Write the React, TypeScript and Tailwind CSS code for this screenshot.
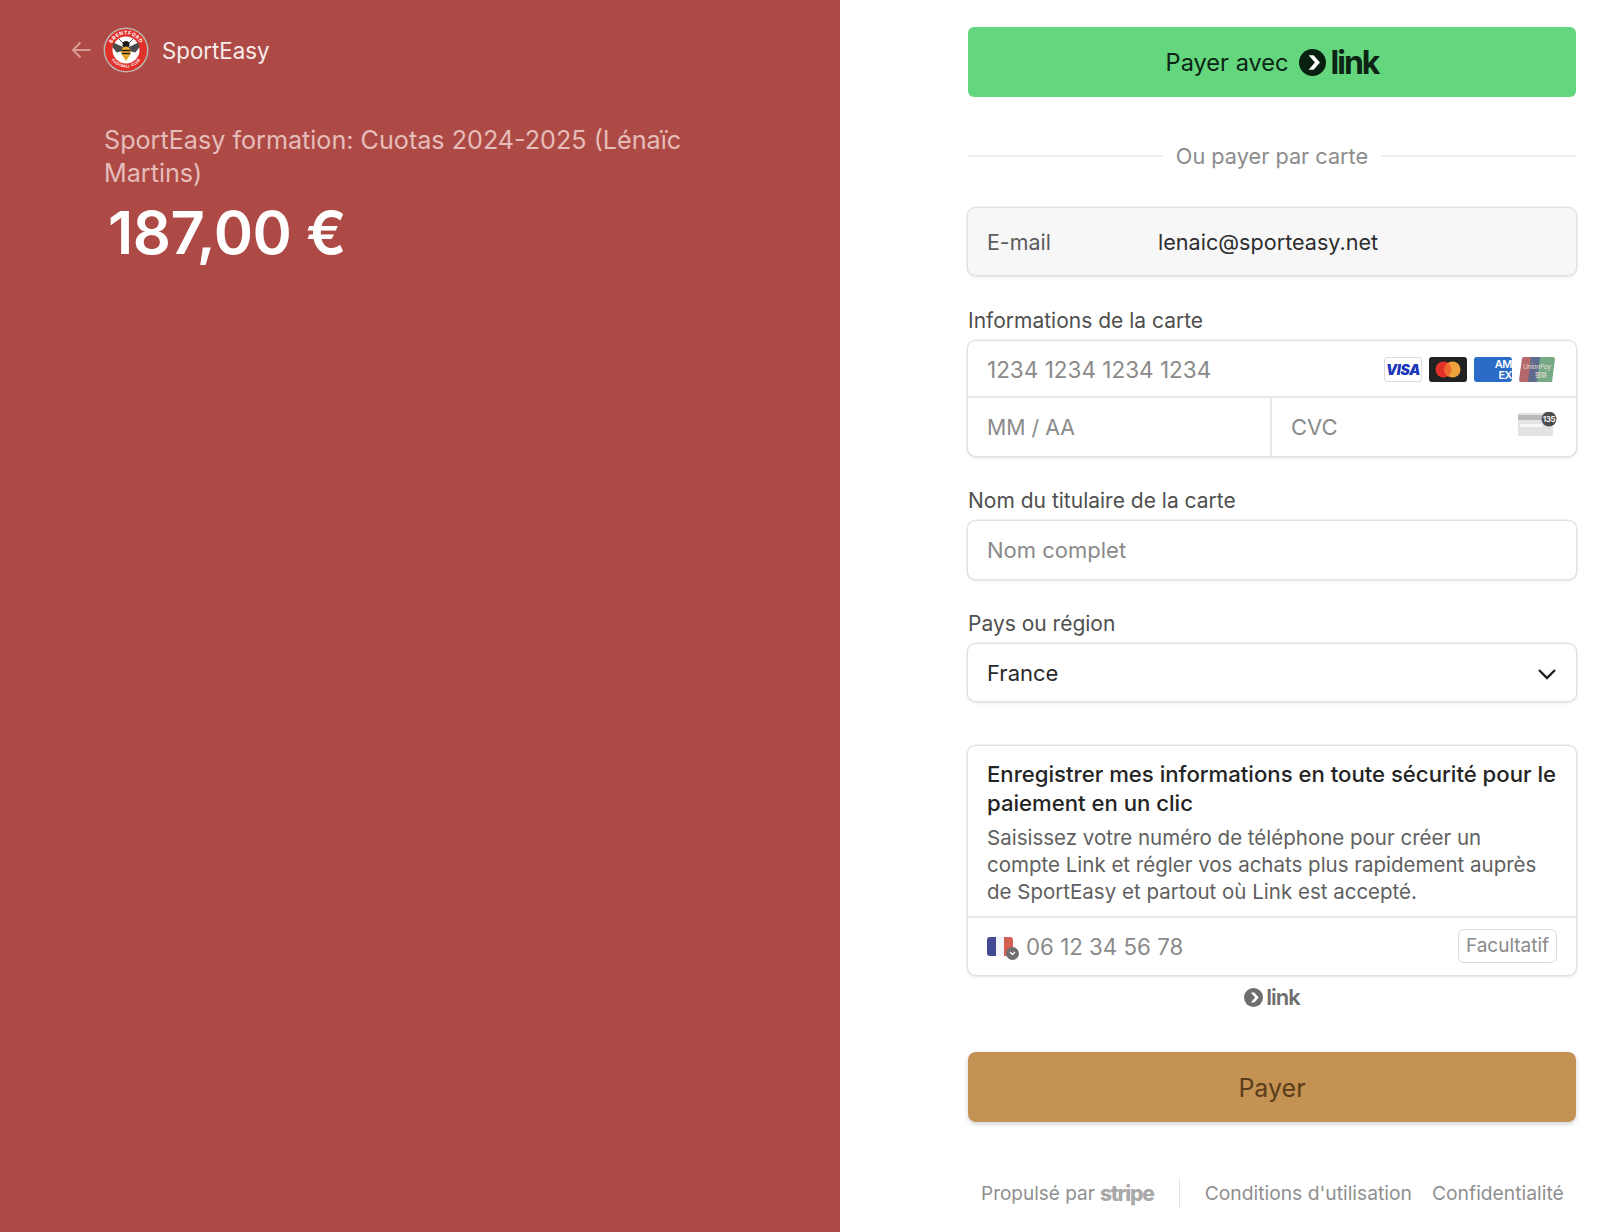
const boxShadow = "rounded-[8px] shadow-[0_0_0_1.5px_#e2e2e2,0_2px_4px_rgba(0,0,0,0.09)]";

function LinkMark({ size, color, arrow }: { size: number; color: string; arrow: string }) {
  return (
    <svg width={size} height={size} viewBox="0 0 28 28" className="shrink-0">
      <circle cx="14" cy="14" r="14" fill={color} />
      <path d="M10 6.500 16.500 14 10 21.500h5.200L21.700 14l-6.500-7.500z" fill={arrow} />
    </svg>
  );
}

function CrestLogo() {
  return (
    <svg width="46" height="46" viewBox="0 0 46 46" className="shrink-0">
      <defs>
        <path id="crestTop" d="M7.500 23a15.500 15.500 0 0 1 31 0" />
        <path id="crestBottom" d="M5.500 23a17.500 17.500 0 0 0 35 0" />
      </defs>
      <circle cx="23" cy="23" r="22.500" fill="#b9b4b0" />
      <circle cx="23" cy="23" r="21" fill="#e0302a" />
      <circle cx="23" cy="23" r="13.500" fill="#ffffff" />
      <text fontSize="5" fontWeight="700" fill="#ffffff" fontFamily="Inter, sans-serif" letterSpacing="0.5">
        <textPath href="#crestTop" startOffset="50%" textAnchor="middle">BRENTFORD</textPath>
      </text>
      <text fontSize="3.600" fontWeight="700" fill="#ffffff" fontFamily="Inter, sans-serif" letterSpacing="0.3">
        <textPath href="#crestBottom" startOffset="50%" textAnchor="middle">FOOTBALL CLUB</textPath>
      </text>
      <path d="M22 21 10.500 15.500 9.500 20l4 5.500 8.500-2z" fill="#4b4b4b" />
      <path d="M24 21l11.500-5.500 1 4.500-4 5.500-8.500-2z" fill="#4b4b4b" />
      <path d="M20 16 16 12M26 16l4-4" stroke="#222" strokeWidth="0.8" />
      <circle cx="23" cy="17.500" r="3.500" fill="#1d1d1d" />
      <ellipse cx="23" cy="25" rx="4.800" ry="5.500" fill="#f0ae2e" />
      <path d="M18.500 23.500h9M18.800 26.500h8.400" stroke="#222" strokeWidth="1.300" />
      <path d="M19.800 29 23 34l3.200-5z" fill="#e79f1f" />
    </svg>
  );
}

function VisaIcon() {
  return (
    <div className="flex h-[25px] w-[38px] items-center justify-center rounded-[3px] border border-[#dcdcdc] bg-white">
      <span className="text-[14px] font-black italic leading-none tracking-[-0.3px] text-[#1a35b8]">VISA</span>
    </div>
  );
}

function MastercardIcon() {
  return (
    <svg width="38" height="25" viewBox="0 0 38 25">
      <rect width="38" height="25" rx="3" fill="#222222" />
      <circle cx="14.500" cy="12.500" r="8" fill="#e2322b" />
      <circle cx="23.500" cy="12.500" r="8" fill="#f0a23b" />
      <path d="M19 5.900a8 8 0 0 1 0 13.200 8 8 0 0 1 0-13.200z" fill="#ee6a2c" />
    </svg>
  );
}

function AmexIcon() {
  return (
    <div className="flex h-[25px] w-[38px] flex-col items-end justify-center rounded-[3px] bg-[#2b6cc9] text-white">
      <span className="text-[11px] font-semibold leading-[11px] tracking-[-0.5px]">AM</span>
      <span className="text-[11px] font-semibold leading-[11px] tracking-[-0.5px]">EX</span>
    </div>
  );
}

function UnionPayIcon() {
  return (
    <svg width="36" height="25" viewBox="0 0 36 25">
      <path d="M3 1.500a2 2 0 0 1 2-1.500h8l-3 25H2a2 2 0 0 1-2-2z" fill="#b5686c" />
      <path d="M12 0h10l-3 25H9z" fill="#5f6a8c" />
      <path d="M21 0h13a2 2 0 0 1 2 2l-3 23H18z" fill="#74ab86" />
      <text x="18" y="12" textAnchor="middle" fontSize="6.500" fontStyle="italic" fill="#e6ddd6" fontFamily="Inter, sans-serif" letterSpacing="-0.2">UnionPay</text>
      <text x="22" y="20" textAnchor="middle" fontSize="6" fill="#e6ddd6" fontFamily="'Noto Sans CJK SC', sans-serif">银联</text>
    </svg>
  );
}

function CvcIcon() {
  return (
    <svg width="40" height="26" viewBox="0 0 40 26">
      <rect x="0" y="1" width="35" height="23" rx="1.500" fill="#e3e3e3" />
      <rect x="0" y="3" width="28" height="5" fill="#b9b9b9" />
      <rect x="2" y="12" width="22" height="3" fill="#f7f7f7" />
      <circle cx="31" cy="7" r="7.500" fill="#4e4e4e" />
      <text x="31" y="10" textAnchor="middle" fontSize="8" fontWeight="600" fill="#ffffff" fontFamily="Inter, sans-serif" letterSpacing="-0.3">135</text>
    </svg>
  );
}

function FieldLabel({ children }: { children: string }) {
  return <div className="mb-[8px] text-[21px] leading-[24px] text-[#4f4f4f]">{children}</div>;
}

export default function App() {
  return (
    <div className="flex h-[1232px] w-full bg-white font-[family-name:Inter,sans-serif]">
      <aside className="h-full w-[840px] shrink-0 bg-[#ae4a45] pl-[71px] pt-[27px]">
        <div className="flex h-[46px] items-center">
          <svg width="20" height="18" viewBox="0 0 20 18" fill="none" stroke="#d99a95" strokeWidth="2">
            <path d="M19.500 9H2M9.500 1.500 2 9l7.500 7.500" />
          </svg>
          <div className="ml-[12px]">
            <CrestLogo />
          </div>
          <span className="ml-[13px] pt-[1px] text-[22.300px] text-[#f8eceb]">SportEasy</span>
        </div>
        <div className="ml-[33px] mt-[51px] w-[620px] text-[25.150px] leading-[33px] text-[#e5bdba]">
          SportEasy formation: Cuotas 2024-2025 (Lénaïc Martins)
        </div>
        <div className="ml-[33px] mt-[7px] pl-[4px] text-[59.700px] font-semibold leading-[70px] tracking-[-0.5px] text-white">187,00 €</div>
      </aside>

      <main className="w-[654px] pl-[128px] pt-[27px]">
        <div className="flex w-[608px] flex-col">
          <button
            type="button"
            className="flex h-[70px] w-full items-center justify-center rounded-[6px] bg-[#64d67e] pt-[2px] text-[#0c2413]"
          >
            <span className="text-[23.600px] font-normal">Payer avec</span>
            <span className="ml-[10px] mb-[2px]">
              <LinkMark size={27} color="#07200f" arrow="#ffffff" />
            </span>
            <span className="ml-[5px] text-[32px] font-bold leading-none tracking-[-2px]">link</span>
          </button>

          <div className="mt-[46px] flex items-center">
            <div className="mb-[1px] h-[2px] flex-1 bg-[#ececec]" />
            <span className="mx-[13px] text-[21.700px] leading-[26px] text-[#8c8c8c]">Ou payer par carte</span>
            <div className="mb-[1px] h-[2px] flex-1 bg-[#ececec]" />
          </div>

          <div className={`${boxShadow} mt-[39px] flex h-[67px] items-center bg-[#f7f7f7] pl-[19px] pt-[2px]`}>
            <span className="w-[171px] text-[21.400px] text-[#5c5c5c]">E-mail</span>
            <span className="text-[21.600px] text-[#2e2e2e]">lenaic@sporteasy.net</span>
          </div>

          <div className="mt-[34px]">
            <FieldLabel>Informations de la carte</FieldLabel>
            <div className={`${boxShadow} bg-white`}>
              <div className="flex h-[55px] items-center justify-between pl-[19px] pr-[21px]">
                <span className="pt-[2px] text-[22.500px] text-[#8a8a8a]">1234 1234 1234 1234</span>
                <div className="mt-[2px] flex items-center gap-[7px]">
                  <VisaIcon />
                  <MastercardIcon />
                  <AmexIcon />
                  <UnionPayIcon />
                </div>
              </div>
              <div className="flex h-[60px] border-t-2 border-[#e8e8e8]">
                <div className="flex w-[304px] items-center border-r-2 border-[#e8e8e8] pl-[19px] pt-[2px] text-[21.300px] text-[#8a8a8a]">MM / AA</div>
                <div className="flex flex-1 items-center justify-between pl-[19px] pr-[18px] text-[22px] text-[#8a8a8a]">
                  <span>CVC</span>
                  <span className="mb-[4px]">
                    <CvcIcon />
                  </span>
                </div>
              </div>
            </div>
          </div>

          <div className="mt-[33px]">
            <FieldLabel>Nom du titulaire de la carte</FieldLabel>
            <div className={`${boxShadow} flex h-[58px] items-center bg-white pl-[19px] text-[22px] text-[#8a8a8a]`}>Nom complet</div>
          </div>

          <div className="mt-[33px]">
            <FieldLabel>Pays ou région</FieldLabel>
            <div className={`${boxShadow} flex h-[57px] items-center justify-between bg-white pl-[19px] pr-[19px] pt-[2px] text-[22px] text-[#2a2a2a]`}>
              <span>France</span>
              <svg width="20" height="12" viewBox="0 0 20 12" fill="none" stroke="#1f1f1f" strokeWidth="2.400">
                <path d="M2 2l8 8 8-8" />
              </svg>
            </div>
          </div>

          <div className={`${boxShadow} mt-[45px] bg-white`}>
            <div className="h-[170px] px-[19px] pt-[14px]">
              <div className="text-[22.150px] font-medium leading-[29px] text-[#242424]">
                Enregistrer mes informations en toute sécurité pour le paiement en un clic
              </div>
              <div className="mt-[6px] pr-[10px] text-[20.500px] leading-[27px] text-[#5f5f5f]">
                Saisissez votre numéro de téléphone pour créer un compte Link et régler vos achats plus rapidement auprès de SportEasy et partout où Link est accepté.
              </div>
            </div>
            <div className="flex h-[59px] items-center justify-between border-t-2 border-[#e8e8e8] pl-[19px] pr-[19px]">
              <div className="flex items-center">
                <div className="relative h-[19px] w-[26px]">
                  <div className="flex h-full w-full overflow-hidden rounded-[3px]">
                    <div className="flex-1 bg-[#434a93]" />
                    <div className="flex-1 bg-[#f3f4fa]" />
                    <div className="flex-1 bg-[#d45e52]" />
                  </div>
                  <div className="absolute left-[19px] top-[10px] flex h-[13px] w-[13px] items-center justify-center rounded-full bg-[#6e6e6e]">
                    <svg width="7" height="5" viewBox="0 0 7 5" fill="none" stroke="#ffffff" strokeWidth="1.300">
                      <path d="M1 1l2.500 2.500L6 1" />
                    </svg>
                  </div>
                </div>
                <span className="ml-[13px] text-[22.300px] text-[#8a8a8a]">06 12 34 56 78</span>
              </div>
              <div className="mb-[1px] flex h-[34px] w-[99px] items-center justify-center rounded-[6px] border border-[#d9d9d9] text-[19px] text-[#8a8a8a]">
                Facultatif
              </div>
            </div>
          </div>

          <div className="mt-[11px] flex h-[22px] items-center justify-center text-[#6e6e6e]">
            <LinkMark size={19} color="#6e6e6e" arrow="#ffffff" />
            <span className="ml-[3px] text-[22px] font-semibold leading-none tracking-[-1px]">link</span>
          </div>

          <button
            type="button"
            className="mt-[44px] flex h-[70px] w-full items-center justify-center rounded-[8px] bg-[#c49252] pt-[4px] text-[25px] text-[#5a3d1a] shadow-[0_2px_5px_rgba(0,0,0,0.18)]"
          >
            Payer
          </button>

          <div className="mt-[54px] flex h-[33px] items-center pt-[2px] text-[19.300px] text-[#8f8f8f]">
            <span className="ml-[13px] pt-[1px] text-[19px]">Propulsé par</span>
            <span className="ml-[5px] text-[21px] font-extrabold leading-none tracking-[-1.200px] text-[#a8a8a8]">stripe</span>
            <div className="ml-[25px] h-full w-px bg-[#e6e6e6]" />
            <span className="ml-[25px]">Conditions d'utilisation</span>
            <span className="ml-[20px]">Confidentialité</span>
          </div>
        </div>
      </main>
    </div>
  );
}
